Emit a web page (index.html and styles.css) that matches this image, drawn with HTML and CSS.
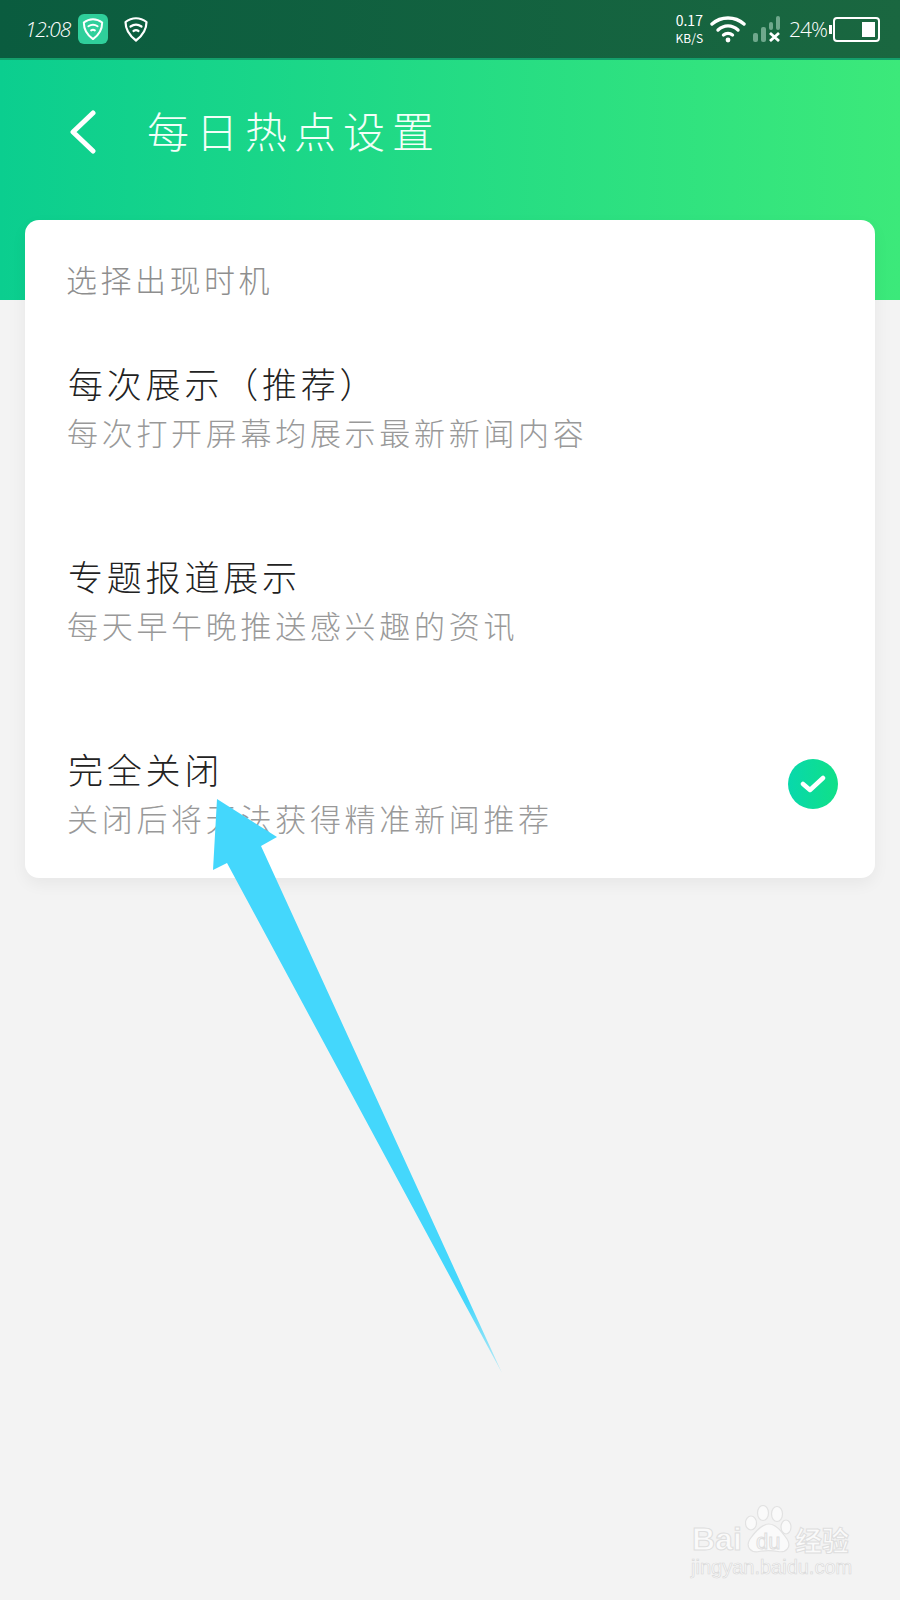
FILE: index.html
```html
<!DOCTYPE html>
<html lang="zh-CN">
<head>
    <meta charset="UTF-8">
    <meta name="viewport" content="width=device-width, initial-scale=1.0">
    <title>每日热点设置</title>
    <link rel="stylesheet" href="styles.css">
</head>
<body>

<div class="page">
    <div class="status-bar">
        <div class="status-left">
            <span class="time">12:08</span>
            <span class="app-badge">
                <svg width="22" height="24" viewBox="0 0 24 26" fill="none" stroke="#fff" stroke-width="2.2" stroke-linejoin="round" stroke-linecap="round">
                    <path d="M2 6C8 1 16 1 22 6C22 13 18 20 12 24C6 20 2 13 2 6Z"/>
                    <path d="M7 10C10 8 14 8 17 10"/>
                    <path d="M10 14.500C11 13.800 13 13.800 14 14.500"/>
                </svg>
            </span>
            <svg class="shield" width="24" height="26" viewBox="0 0 24 26" fill="none" stroke="#fff" stroke-width="2.2" stroke-linejoin="round" stroke-linecap="round">
                <path d="M1.500 6C8 1 16 1 22.500 6C22.500 13 18 20 12 24.500C6 20 1.500 13 1.500 6Z"/>
                <path d="M6.500 10.500C10 8 14 8 17.500 10.500"/>
                <path d="M9.500 15C11 14 13 14 14.500 15"/>
            </svg>
        </div>
        <div class="status-right">
            <div class="net-speed">
                <span class="net-value">0.17</span>
                <span class="net-unit">KB/S</span>
            </div>
            <svg class="wifi" width="36" height="28" viewBox="0 0 36 28" fill="none" stroke="#fff" stroke-width="3.400" stroke-linecap="round">
                <path d="M2 9C11 1 25 1 34 9"/>
                <path d="M8 15C14 9.500 22 9.500 28 15"/>
                <path d="M13.500 20C16 18 20 18 22.500 20"/>
                <circle cx="18" cy="25" r="2.400" fill="#fff" stroke="none"/>
            </svg>
            <svg class="signal" width="28" height="26" viewBox="0 0 28 26">
                <rect x="0" y="17" width="5" height="9" rx="2" fill="#6fa88c"/>
                <rect x="8" y="11" width="5" height="15" rx="2" fill="#6fa88c"/>
                <rect x="16" y="6" width="4" height="8" rx="2" fill="#6fa88c"/>
                <rect x="23" y="0" width="4" height="14" rx="2" fill="#6fa88c"/>
                <path d="M17 17L26 25M26 17L17 25" stroke="#fff" stroke-width="2.800"/>
            </svg>
            <span class="battery-text">24%</span>
            <div class="battery">
                <span class="battery-level"></span>
            </div>
        </div>
    </div>

    <div class="hero">
        <div class="nav-row">
            <svg class="back" width="28" height="44" viewBox="0 0 28 44" fill="none" stroke="#fff" stroke-width="5" stroke-linecap="round" stroke-linejoin="round">
                <path d="M24 3L4 22L24 41"/>
            </svg>
            <h1 class="nav-title">每日热点设置</h1>
        </div>
    </div>

    <div class="card">
        <div class="section-label">选择出现时机</div>

        <div class="option">
            <div class="option-text">
                <div class="option-title">每次展示（推荐）</div>
                <div class="option-desc">每次打开屏幕均展示最新新闻内容</div>
            </div>
        </div>

        <div class="option">
            <div class="option-text">
                <div class="option-title">专题报道展示</div>
                <div class="option-desc">每天早午晚推送感兴趣的资讯</div>
            </div>
        </div>

        <div class="option">
            <div class="option-text">
                <div class="option-title">完全关闭</div>
                <div class="option-desc">关闭后将无法获得精准新闻推荐</div>
            </div>
            <span class="check">
                <svg width="26" height="20" viewBox="0 0 26 20" fill="none" stroke="#fff" stroke-width="4.500" stroke-linecap="round" stroke-linejoin="round">
                    <path d="M3 10L10 16L23 4"/>
                </svg>
            </span>
        </div>
    </div>

    <svg class="arrow" width="900" height="1600" viewBox="0 0 900 1600">
        <defs>
            <linearGradient id="arrowFade" gradientUnits="userSpaceOnUse" x1="470" y1="1300" x2="502" y2="1373">
                <stop offset="0" stop-color="#44d7fc"/>
                <stop offset="1" stop-color="#44d7fc" stop-opacity="0.300"/>
            </linearGradient>
        </defs>
        <polygon points="217,799 277,837 261,846 502,1373 227,863 213,870" fill="url(#arrowFade)"/>
    </svg>

    <div class="watermark">
        <div class="wm-logo">
            <span class="wm-bai">Bai</span>
            <svg class="wm-paw" width="47" height="48" viewBox="0 0 47 48" fill="#fafafa" stroke="#e2e2e2" stroke-width="1.200">
                <ellipse cx="6" cy="18" rx="5.500" ry="7"/>
                <ellipse cx="18" cy="8" rx="5.500" ry="7.500"/>
                <ellipse cx="32" cy="9" rx="5.500" ry="7.500"/>
                <ellipse cx="41" cy="22" rx="5" ry="7"/>
                <path d="M24 19C31 19 37 27 42 34C47 42 41 48 33 46.500C27 45.500 20 45.500 14 46.500C6 48 0 42 5 34C10 27 17 19 24 19Z"/>
            </svg>
            <span class="wm-du">du</span>
            <span class="wm-jy">经验</span>
        </div>
        <div class="wm-url">jingyan.baidu.com</div>
    </div>
</div>

</body>
</html>
```

FILE: styles.css
```css
body {
    margin: 0;
    background-color: #f3f3f3;
    font-family: "Noto Sans CJK SC", "Noto Sans", sans-serif;
}
.page {
    position: relative;
    width: 900px;
    height: 1600px;
    overflow: hidden;
}
.status-bar {
    height: 60px;
    box-sizing: border-box;
    padding: 0 20px 0 25px;
    display: flex;
    justify-content: space-between;
    align-items: center;
    background: linear-gradient(90deg, #0a5c3f, #1a6740);
    border-bottom: 2px solid #14a06c;
    color: #fff;
}
.status-left,
.status-right {
    display: flex;
    align-items: center;
}
.time {
    width: 53px;
    font-family: "Open Sans", sans-serif;
    font-size: 21px;
    font-style: italic;
    font-weight: 300;
    letter-spacing: -1.2px;
}
.app-badge {
    width: 30px;
    height: 30px;
    border-radius: 6px;
    background-color: #2fcf9b;
    display: flex;
    align-items: center;
    justify-content: center;
}
.shield {
    margin-left: 16px;
}
.net-speed {
    display: flex;
    flex-direction: column;
    align-items: center;
    line-height: 18px;
    margin-right: 7px;
}
.net-value {
    font-size: 14px;
}
.net-unit {
    font-size: 12px;
}
.signal {
    margin-left: 7px;
}
.battery-text {
    margin-left: 8px;
    font-size: 21px;
    font-weight: 300;
    letter-spacing: -1px;
    font-family: "Open Sans", sans-serif;
}
.battery {
    position: relative;
    width: 47px;
    height: 25px;
    margin-left: 6px;
    border: 2.5px solid #fff;
    border-radius: 4px;
    box-sizing: border-box;
    display: flex;
    justify-content: flex-end;
    padding: 3px;
}
.battery:before {
    content: "";
    position: absolute;
    left: -6px;
    top: 6px;
    width: 3px;
    height: 9px;
    background-color: #fff;
}
.battery-level {
    width: 13px;
    background-color: #fff;
}
.hero {
    height: 240px;
    background: linear-gradient(90deg, #0bce8f, #3ce97a);
}
.nav-row {
    height: 144px;
    display: flex;
    align-items: center;
    padding-left: 69px;
}
.nav-title {
    margin: 0 0 6px 50px;
    color: #f2fff8;
    font-size: 42px;
    font-weight: 300;
    letter-spacing: 7px;
}
.card {
    position: relative;
    margin: -80px 25px 0;
    padding: 37px 42px 35px;
    height: 658px;
    box-sizing: border-box;
    background-color: #fff;
    border-radius: 14px;
    box-shadow: 0 6px 16px rgba(0, 0, 0, 0.05);
}
.section-label {
    height: 44px;
    line-height: 44px;
    margin-bottom: 59px;
    margin-left: -1px;
    color: #8e8e8e;
    font-size: 31px;
    font-weight: 300;
    letter-spacing: 3.5px;
}
.option {
    display: flex;
    justify-content: space-between;
    align-items: flex-start;
    margin-bottom: 95px;
}
.option:last-child {
    margin-bottom: 0;
}
.option-title {
    height: 50px;
    line-height: 50px;
    margin-top: -2px;
    margin-bottom: 2px;
    padding-left: 1px;
    color: #222;
    font-size: 35px;
    font-weight: 300;
    letter-spacing: 3.8px;
}
.option-desc {
    height: 48px;
    line-height: 48px;
    margin-top: -2px;
    margin-bottom: 2px;
    color: #999;
    font-size: 31px;
    font-weight: 300;
    letter-spacing: 3.7px;
}
.check {
    width: 50px;
    height: 50px;
    margin: 13px -5px 0 0;
    border-radius: 50%;
    background: linear-gradient(90deg, #08d8ac, #10e088);
    display: flex;
    align-items: center;
    justify-content: center;
}
.arrow {
    position: absolute;
    left: 0;
    top: 0;
}
.watermark {
    position: absolute;
    left: 690px;
    top: 1505px;
    width: 170px;
    padding-left: 2px;
}
.wm-logo {
    position: relative;
    height: 54px;
    display: flex;
    align-items: flex-end;
    font-family: "Liberation Sans", sans-serif;
    color: #fafafa;
    -webkit-text-stroke: 1px #dedede;
    font-weight: bold;
}
.wm-bai {
    width: 53px;
    font-size: 32px;
    line-height: 40px;
}
.wm-paw {
    margin-bottom: 6px;
    flex-shrink: 0;
}
.wm-du {
    position: absolute;
    left: 64px;
    top: 26px;
    font-size: 22px;
    line-height: 22px;
    font-weight: normal;
}
.wm-jy {
    margin-left: 3px;
    font-family: "Noto Sans CJK SC", sans-serif;
    font-size: 27px;
    line-height: 38px;
}
.wm-url {
    margin-top: -2px;
    margin-left: -1px;
    font-family: "Liberation Sans", sans-serif;
    font-size: 20px;
    line-height: 20px;
    color: #fafafa;
    -webkit-text-stroke: 0.7px #dadada;
}
```
